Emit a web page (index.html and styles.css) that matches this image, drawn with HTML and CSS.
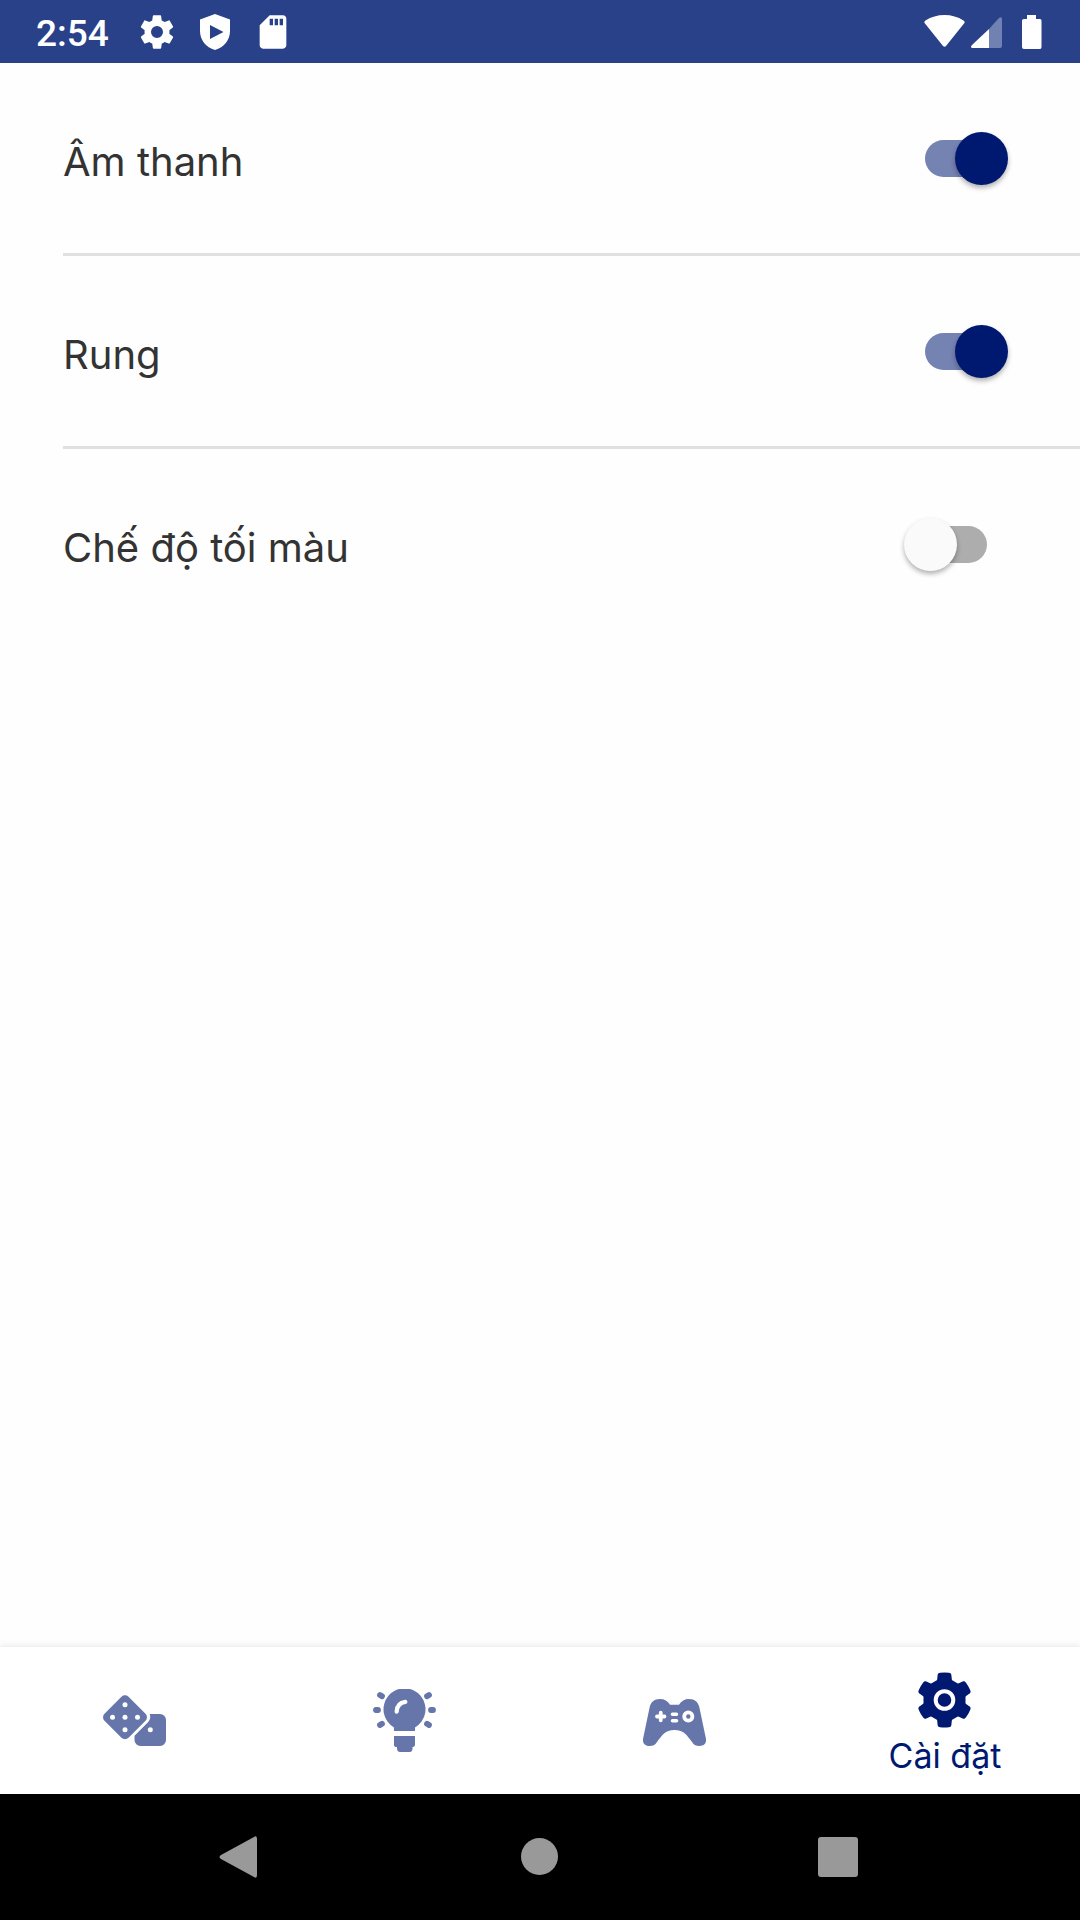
FILE: index.html
```html
<!DOCTYPE html>
<html lang="vi">
<head>
<meta charset="utf-8">
<meta name="viewport" content="width=device-width, initial-scale=1">
<title>Cài đặt</title>
<link rel="stylesheet" href="styles.css">
</head>
<body>
<header class="status">
  <span class="status-time">2:54</span>
  <div class="status-notes">
    <svg width="40" height="40" viewBox="0 0 24 24" fill="currentColor" aria-hidden="true"><path d="M19.4 13c.04-.3.07-.64.07-1s-.03-.7-.07-1l2.1-1.65c.2-.15.25-.42.13-.64l-2-3.46c-.12-.22-.4-.3-.6-.22l-2.5 1c-.52-.4-1.08-.73-1.7-.98l-.37-2.65A.5.5 0 0 0 14 2h-4a.5.5 0 0 0-.5.42l-.37 2.65c-.62.25-1.18.58-1.7.98l-2.48-1c-.23-.1-.5 0-.6.22l-2 3.46c-.14.22-.08.5.12.64L4.6 11c-.04.3-.08.66-.08 1s.04.7.08 1l-2.13 1.65c-.2.15-.24.42-.12.64l2 3.46c.12.22.4.3.6.22l2.5-1c.52.4 1.08.73 1.7.98l.37 2.65c.04.23.24.4.48.4h4c.25 0 .46-.17.5-.4l.37-2.65c.6-.25 1.17-.58 1.68-.98l2.5 1c.22.1.48 0 .6-.22l2-3.46c.12-.22.07-.5-.13-.64zM12 15.6a3.6 3.6 0 1 1 0-7.2 3.6 3.6 0 0 1 0 7.2z"/></svg>
    <svg width="40" height="40" viewBox="0 0 40 40" fill="currentColor" fill-rule="evenodd" aria-hidden="true"><path d="M20 2L35 7.500V19C35 28 29 35.500 20 38C11 35.500 5 28 5 19V7.500ZM15 13V27L28.500 20Z"/></svg>
    <svg width="40" height="40" viewBox="0 0 24 24" fill="currentColor" aria-hidden="true"><path d="M18 2h-8L4 8v12c0 1.100.9 2 2 2h12c1.100 0 2-.9 2-2V4c0-1.100-.9-2-2-2zm-6 6h-2V4h2zm3 0h-2V4h2zm3 0h-2V4h2z"/></svg>
  </div>
  <div class="status-system">
    <svg width="41" height="34" viewBox="0 0 41 34" fill="currentColor" aria-hidden="true"><path d="M1 8.500Q-.5 7 1.500 5.500Q10 0 20.500 0T39.500 5.500Q41.500 7 40 8.500L22 31Q20.500 32.500 19 31Z"/></svg>
    <svg width="31" height="34" viewBox="0 0 31 34" fill="currentColor" aria-hidden="true"><path opacity=".34" d="M18 14L28 3Q31 1 31 4V31Q31 33 29 33H18Z"/><path d="M18 14V33H1Q-1 32 1 30Z"/></svg>
    <svg class="battery" width="20" height="34" viewBox="0 0 20 34" fill="currentColor" aria-hidden="true"><path d="M5 0H14V4H18Q19.500 4 19.500 5.500V32Q19.500 34 18 34H2Q0 34 0 32V5.500Q0 4 2 4H5Z"/></svg>
  </div>
</header>

<main class="settings">
  <div class="row">
    <label class="row-label" for="sound">Âm thanh</label>
    <input class="switch" id="sound" type="checkbox" role="switch" checked>
  </div>
  <div class="row">
    <label class="row-label" for="vibrate">Rung</label>
    <input class="switch" id="vibrate" type="checkbox" role="switch" checked>
  </div>
  <div class="row">
    <label class="row-label" for="dark">Chế độ tối màu</label>
    <input class="switch" id="dark" type="checkbox" role="switch">
  </div>
</main>

<nav class="tabs">
  <a class="tab" href="#dice" aria-label="Xúc xắc">
    <svg width="64" height="63" viewBox="0 0 64 63" fill="currentColor" aria-hidden="true">
      <rect x="5" y="11.300" width="34" height="34" rx="5" transform="rotate(45 22 28.300)"/>
      <path d="M46.700 25H57a6 6 0 0 1 6 6V51a6 6 0 0 1-6 6H37.500a6 6 0 0 1-6-6V46.800L45 33.300Q48.500 29.500 46.700 25Z"/>
      <g fill="#fff"><circle cx="22" cy="15.800" r="2.500"/><circle cx="22" cy="28.300" r="2.500"/><circle cx="22" cy="40.800" r="2.500"/><circle cx="9.500" cy="28.300" r="2.500"/><circle cx="34.500" cy="28.300" r="2.500"/><circle cx="47.300" cy="40.800" r="2.500"/></g>
    </svg>
  </a>
  <a class="tab" href="#tips" aria-label="Gợi ý">
    <svg width="64" height="63" viewBox="0 0 64 63" fill="currentColor" aria-hidden="true">
      <path d="M21 38.500A21 21 0 1 1 42 38.500V42H21ZM21 47H42V56Q42 58 39.500 58V60Q39 63 37 63H27Q24.500 63 24 60V58Q21 58 21 56Z"/>
      <path d="M23.700 22.500Q24 14 32.300 12.800" fill="none" stroke="#fff" stroke-width="4.300" stroke-linecap="round"/>
      <path d="M3 21H5M58 21H60M7 6L9 7.200M56 6L54 7.200M7 36L9 34.800M56 36L54 34.800" stroke="currentColor" stroke-width="5.800" stroke-linecap="round"/>
    </svg>
  </a>
  <a class="tab" href="#games" aria-label="Trò chơi">
    <svg width="64" height="63" viewBox="0 0 64 63" fill="currentColor" aria-hidden="true">
      <path d="M17 10Q23.500 10 27 15.700H36Q39.500 10 46 10C52 10 55 13 56.300 18L63 50C63.500 55 60.500 57 56.500 57C53 57 51 56 49 53C44 46.500 41 41 31.500 41C22 41 19 46.500 14 53C12 56 10 57 6.500 57C2.500 57-.5 55 0 50L6.700 18C8 13 11 10 17 10Z"/>
      <g fill="none" stroke="#fff" stroke-linecap="round"><path d="M14 27.500H21.500M17.750 23.700V31.300" stroke-width="3.800"/><path d="M29.500 25.300H33.500M29.500 31.700H33.500" stroke-width="3.600"/><circle cx="45.300" cy="27.500" r="4.100" stroke-width="3.800"/></g>
    </svg>
  </a>
  <a class="tab tab-active" href="#settings" aria-current="page">
    <svg width="64" height="56" viewBox="-31.500 -28 64 56" fill="currentColor" aria-hidden="true">
      <path d="M0-24.200L21-12.100V12.100L0 24.200L-21 12.100V-12.100Z"/>
      <g id="tooth-pair"><path id="tooth" d="M-7.500-19L-6.800-25.500Q-6.500-27 -4.500-27.200Q0-27.800 4.500-27.200Q6.500-27 6.800-25.500L7.500-19Z"/><use href="#tooth" transform="rotate(180)"/></g>
      <use href="#tooth-pair" transform="rotate(60)"/><use href="#tooth-pair" transform="rotate(120)"/>
      <circle r="8.800" fill="none" stroke="#fff" stroke-width="4"/>
    </svg>
    <span>Cài đặt</span>
  </a>
</nav>

<footer class="system-nav">
  <button class="system-button" type="button" aria-label="Quay lại"><svg width="84" height="44" viewBox="0 0 84 44" fill="currentColor" aria-hidden="true"><path d="M21 20L54 2Q57 0 57 4V40Q57 44 54 42L21 24Q18 22 21 20Z"/></svg></button>
  <button class="system-button" type="button" aria-label="Trang chủ"><svg width="84" height="44" viewBox="0 0 84 44" fill="currentColor" aria-hidden="true"><circle cx="41.500" cy="21.500" r="18.500"/></svg></button>
  <button class="system-button" type="button" aria-label="Gần đây"><svg width="84" height="44" viewBox="0 0 84 44" fill="currentColor" aria-hidden="true"><rect x="22" y="2" width="40" height="40" rx="3"/></svg></button>
</footer>
</body>
</html>
```
FILE: styles.css
```css
* {
  box-sizing: border-box;
}

body {
  margin: 0;
  min-height: 100vh;
  display: flex;
  flex-direction: column;
  background: #fefefe;
  color: #333;
  font-family: Inter, "Noto Sans", sans-serif;
}

svg {
  display: block;
}

/* Status bar */
.status {
  display: flex;
  align-items: center;
  height: 63px;
  padding: 0 38px 0 36px;
  background: #284189;
  color: #fff;
}

.status-time {
  font: 500 37px/40px Roboto, sans-serif;
  padding-top: 4px;
}

.status-notes {
  display: flex;
  gap: 18px;
  margin-left: 28px;
}

.status-system {
  display: flex;
  gap: 6px;
  margin-left: auto;
}

.battery {
  margin-left: 14px;
}

/* Settings list */
.settings {
  flex: 1;
  padding-left: 63px;
}

.row {
  display: flex;
  align-items: center;
  justify-content: space-between;
  height: 193px;
  padding-right: 72px;
  border-bottom: 3px solid #e0e0e0;
}

.row:last-child {
  border-bottom-color: transparent;
}

.row-label {
  padding-top: 8px;
  font-size: 40px;
  line-height: 56px;
}

.switch {
  appearance: none;
  display: flex;
  align-items: center;
  width: 104px;
  height: 53px;
  margin: 0;
  position: relative;
}

.switch::before {
  content: "";
  width: 62px;
  height: 37px;
  margin: 0 auto;
  border-radius: 19px;
  background: #adadad;
}

.switch::after {
  content: "";
  position: absolute;
  left: 0;
  top: 0;
  width: 53px;
  height: 53px;
  border-radius: 50%;
  background: #fafafa;
  box-shadow: 0 3px 5px rgba(0, 0, 0, .3);
}

.switch:checked::before {
  background: #7583b3;
}

.switch:checked::after {
  left: auto;
  right: 0;
  background: #001970;
}

/* Bottom tabs */
.tabs {
  display: grid;
  grid-template-columns: repeat(4, 1fr);
  height: 147px;
  background: #fff;
  box-shadow: 0 0 8px rgba(0, 0, 0, .12);
}

.tab {
  display: flex;
  flex-direction: column;
  align-items: center;
  justify-content: center;
  gap: 8px;
  color: #6676aa;
  font-size: 34px;
  line-height: 40px;
  text-decoration: none;
}

.tab-active {
  padding-top: 6px;
  color: #001970;
}

/* System navigation */
.system-nav {
  position: relative;
  display: flex;
  align-items: center;
  justify-content: center;
  gap: 214px;
  height: 126px;
  background: #000;
}

.system-button {
  padding: 0;
  border: 0;
  background: none;
  color: #999;
}
```
